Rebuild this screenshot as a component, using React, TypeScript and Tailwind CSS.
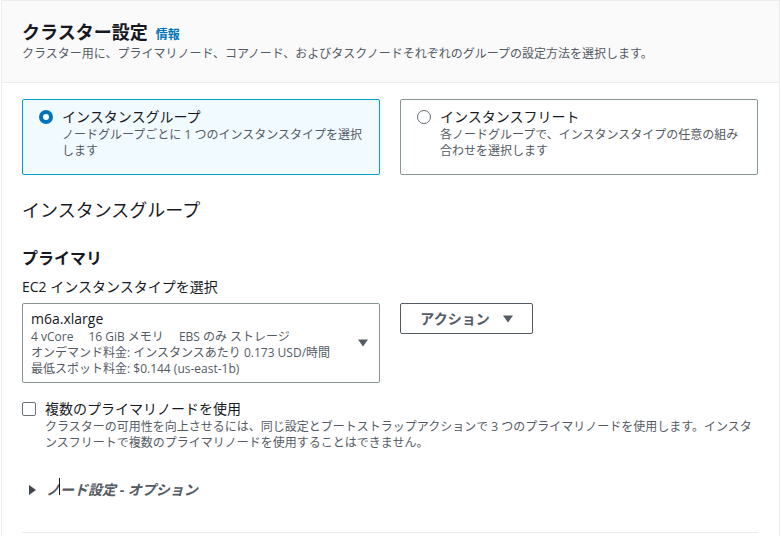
const font = {
  fontFamily: '"Open Sans", "Noto Sans CJK JP", sans-serif',
};

function Radio({ checked }: { checked: boolean }) {
  return checked ? (
    <span className="mt-[3px] flex h-[14px] w-[14px] shrink-0 rounded-full border-[4px] border-[#0073bb] bg-white" />
  ) : (
    <span className="mt-[3px] flex h-[14px] w-[14px] shrink-0 rounded-full border border-[#687078] bg-white" />
  );
}

function Caret({ className }: { className: string }) {
  return (
    <svg viewBox="0 0 10 8" className={className} fill="currentColor">
      <path d="M0 0.5h10L5 7.5z" />
    </svg>
  );
}

const options = [
  {
    title: "インスタンスグループ",
    desc: "ノードグループごとに 1 つのインスタンスタイプを選択します",
    checked: true,
  },
  {
    title: "インスタンスフリート",
    desc: "各ノードグループで、インスタンスタイプの任意の組み合わせを選択します",
    checked: false,
  },
];

export default function App() {
  return (
    <div className="h-[536px] w-[781px] overflow-hidden bg-white" style={font}>
      <section className="ml-[1px] h-[560px] w-[779px] border border-[#eaeded] bg-white">
        <header className="border-b border-[#eaeded] bg-[#fafafa] pl-5 pr-5 pt-[19px] pb-[20px]">
          <div className="flex items-baseline gap-2">
            <h2 className="text-[18px] font-bold leading-6 text-[#16191f]">
              クラスター設定
            </h2>
            <a className="text-[12px] font-bold text-[#0073bb]">情報</a>
          </div>
          <p className="mt-[2px] text-[12px] leading-4 text-[#545b64]">
            クラスター用に、プライマリノード、コアノード、およびタスクノードそれぞれのグループの設定方法を選択します。
          </p>
        </header>

        <div className="pl-5 pr-[21px] pt-4">
          <div className="grid grid-cols-2 gap-5">
            {options.map((o) => (
              <div
                key={o.title}
                className={
                  o.checked
                    ? "flex h-[76px] gap-[9px] rounded-[2px] border border-[#00a1c9] bg-[#f1faff] pl-4 pr-4 pt-[7px]"
                    : "flex h-[76px] gap-[9px] rounded-[2px] border border-[#879596] bg-white pl-4 pr-4 pt-[7px]"
                }
              >
                <Radio checked={o.checked} />
                <div>
                  <div className="text-[14px] leading-5 text-[#16191f]">{o.title}</div>
                  <div className="text-[12px] leading-4 text-[#545b64]">{o.desc}</div>
                </div>
              </div>
            ))}
          </div>

          <h3 className="mt-[23px] text-[18px] leading-6 text-[#16191f]">
            インスタンスグループ
          </h3>

          <h4 className="mt-[24px] text-[16px] font-bold leading-6 text-[#16191f]">
            プライマリ
          </h4>

          <div className="mt-[7px] text-[14px] leading-5 text-[#16191f]">
            EC2 インスタンスタイプを選択
          </div>

          <div className="mt-[6px] flex items-start gap-5">
            <div className="flex h-[80px] w-[358px] items-center rounded-[2px] border border-[#879596] bg-white pl-2 pr-[11px]">
              <div className="flex-1">
                <div className="text-[14px] leading-5 text-[#16191f]">m6a.xlarge</div>
                <div className="text-[12px] leading-4 text-[#545b64]">
                  <span>4 vCore</span>
                  <span className="ml-[15px]">16 GiB メモリ</span>
                  <span className="ml-[15px]">EBS のみ ストレージ</span>
                </div>
                <div className="text-[12px] leading-4 text-[#545b64]">
                  オンデマンド料金: インスタンスあたり 0.173 USD/時間
                </div>
                <div className="text-[12px] leading-4 text-[#545b64]">
                  最低スポット料金: $0.144 (us-east-1b)
                </div>
              </div>
              <Caret className="h-[8px] w-[10px] text-[#545b64]" />
            </div>

            <button className="flex h-[31px] w-[133px] items-center justify-center gap-[13px] rounded-[2px] border border-[#545b64] bg-white text-[14px] font-bold text-[#545b64]">
              アクション
              <Caret className="h-[8px] w-[10px]" />
            </button>
          </div>

          <div className="mt-[16px] flex gap-[9px]">
            <span className="mt-[3px] h-[14px] w-[14px] shrink-0 rounded-[2px] border border-[#687078] bg-white" />
            <div>
              <div className="text-[14px] leading-5 text-[#16191f]">
                複数のプライマリノードを使用
              </div>
              <div className="text-[12px] leading-4 text-[#545b64]">
                クラスターの可用性を向上させるには、同じ設定とブートストラップアクションで 3 つのプライマリノードを使用します。インスタンスフリートで複数のプライマリノードを使用することはできません。
              </div>
            </div>
          </div>

          <div className="relative mt-[29px] flex items-center gap-[10px] pl-[7px]">
            <svg viewBox="0 0 7 10" className="h-[10px] w-[7px] text-[#414750]" fill="currentColor">
              <path d="M0 0l7 5-7 5z" />
            </svg>
            <span className="text-[14px] font-bold italic leading-5 text-[#545b64]">
              ノード設定 - オプション
            </span>
            <span className="absolute left-[37px] top-[-2px] h-[17px] w-px bg-[#16191f]" />
          </div>

          <div className="mt-[32px] border-t border-[#eaeded]" />
        </div>
      </section>
    </div>
  );
}
